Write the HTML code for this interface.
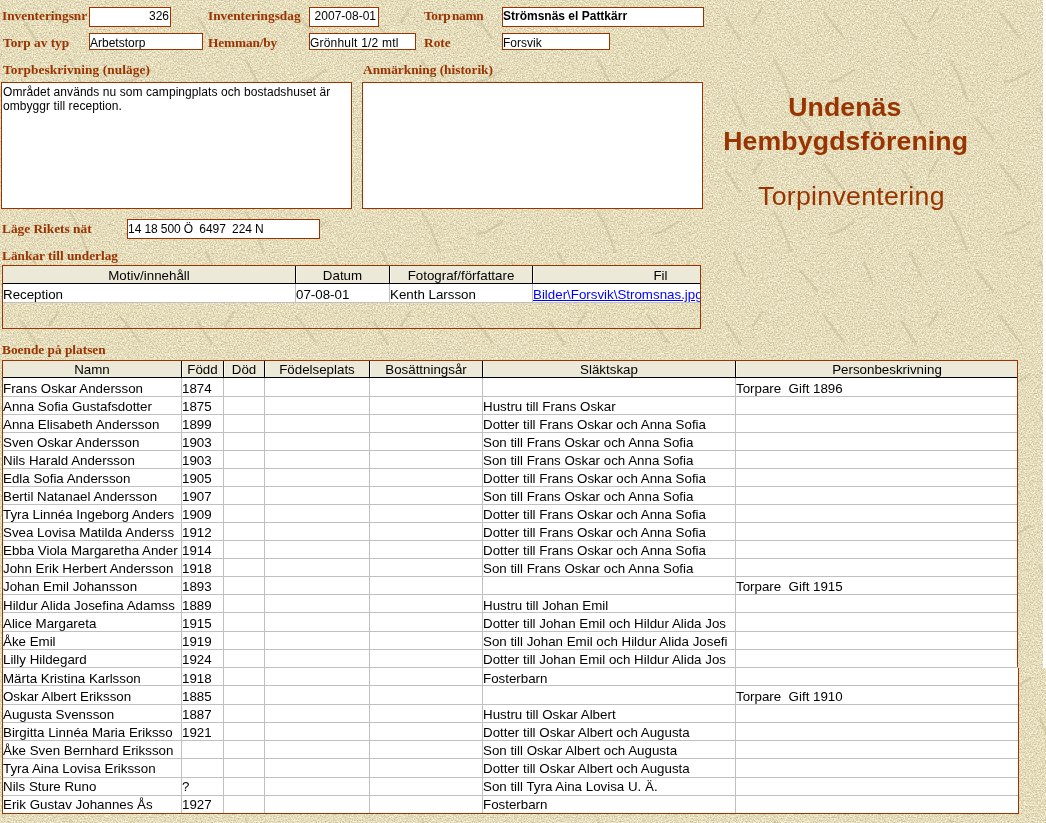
<!DOCTYPE html>
<html><head><meta charset="utf-8"><title>Torpinventering</title><style>
*{margin:0;padding:0;box-sizing:border-box}
html,body{width:1046px;height:823px;overflow:hidden}
body{position:relative;background:#e3dbba;font-family:"Liberation Sans",sans-serif;font-size:12px;color:#000}
#tex{position:absolute;left:0;top:0;width:1046px;height:823px}
.a{position:absolute;white-space:pre}
.lb{position:absolute;white-space:pre;font-family:"Liberation Serif",serif;font-weight:bold;font-size:13.33px;line-height:16px;color:#993300}
.bx{position:absolute;background:#fff;border:1px solid #993300;overflow:hidden;white-space:pre;font-size:12px;line-height:14px;padding:2px 1px 0 0}
.t{position:absolute;white-space:pre;font-size:13.33px;line-height:18px;overflow:hidden;height:18px}
.h{position:absolute;white-space:pre;font-size:13.33px;line-height:16px;text-align:center;height:16px;overflow:hidden}
.hl{position:absolute;height:1px;background:#c0c0c0}
.vl{position:absolute;width:1px;background:#c0c0c0}
.ttl{position:absolute;white-space:pre;color:#993300;text-align:center;width:400px}
</style></head><body>
<svg id="tex" width="1046" height="823"><filter id="n" x="0" y="0" width="100%" height="100%" color-interpolation-filters="sRGB"><feTurbulence type="fractalNoise" baseFrequency="0.75" numOctaves="2" seed="7"/><feColorMatrix type="matrix" values="0.45 0 0 0 0.669  0.45 0 0 0 0.638  0.50 0 0 0 0.483  0 0 0 0 1"/></filter><rect width="1046" height="823" filter="url(#n)"/><defs><filter id="b" x="-20%" y="-20%" width="140%" height="140%"><feGaussianBlur stdDeviation="0.7"/></filter><pattern id="s" width="176" height="152" patternUnits="userSpaceOnUse"><g stroke="#b9b088" stroke-opacity="0.38" stroke-width="2.4" stroke-linecap="round" fill="none" filter="url(#b)"><path d="M22 18l14 22"/><path d="M70 60l9 17l8 22"/><path d="M120 12l20 26"/><path d="M150 70l-16 10l-9 2"/><path d="M30 100l11 24"/><path d="M96 118l17 21"/><path d="M160 110l8 20"/><path d="M58 8l-9 14"/></g></pattern></defs><rect width="1046" height="823" fill="url(#s)"/></svg>
<div id="w" style="position:absolute;left:0;top:0;width:1046px;height:823px;will-change:transform">
<div class="a" style="left:1043px;top:0;width:3px;height:668px;background:#fff"></div>
<div class="lb" style="left:2px;top:8px;">Inventeringsnr</div>
<div class="lb" style="left:208px;top:8px;">Inventeringsdag</div>
<div class="lb" style="left:424px;top:8px;word-spacing:-1.5px;letter-spacing:-0.3px">Torp namn</div>
<div class="lb" style="left:3px;top:35px;">Torp av typ</div>
<div class="lb" style="left:208px;top:35px;letter-spacing:-0.15px">Hemman/by</div>
<div class="lb" style="left:424px;top:35px;">Rote</div>
<div class="lb" style="left:3px;top:62px;letter-spacing:0.08px">Torpbeskrivning (nuläge)</div>
<div class="lb" style="left:363px;top:62px;">Anmärkning (historik)</div>
<div class="lb" style="left:2px;top:221px;">Läge Rikets nät</div>
<div class="lb" style="left:2px;top:248px;">Länkar till underlag</div>
<div class="lb" style="left:2px;top:342px;">Boende på platsen</div>
<div class="bx" style="left:89px;top:7px;width:82px;height:20px;text-align:right;padding-right:1px;padding-top:1px">326</div>
<div class="bx" style="left:309px;top:7px;width:70px;height:20px;text-align:right;padding-right:2px;padding-top:1px">2007-08-01</div>
<div class="bx" style="left:502px;top:7px;width:202px;height:20px;font-weight:bold;padding-top:1px">Strömsnäs el Pattkärr</div>
<div class="bx" style="left:89px;top:33px;width:114px;height:17px;">Arbetstorp</div>
<div class="bx" style="left:309px;top:33px;width:107px;height:17px;letter-spacing:0.2px">Grönhult 1/2 mtl</div>
<div class="bx" style="left:502px;top:33px;width:108px;height:17px;">Forsvik</div>
<div class="bx" style="left:1px;top:82px;width:351px;height:127px;padding-left:1px;letter-spacing:0.07px">Området används nu som campingplats och bostadshuset är
ombyggr till reception.</div>
<div class="bx" style="left:362px;top:82px;width:341px;height:127px;"></div>
<div class="bx" style="left:127px;top:219px;width:193px;height:20px;padding-top:2px;padding-left:0;word-spacing:-0.3px">14 18 500 Ö  6497  224 N</div>
<div class="a" style="left:788.2px;top:91.46px;font-size:26.67px;line-height:32px;font-weight:bold;letter-spacing:0.1px;color:#993300">Undenäs</div>
<div class="a" style="left:723.2px;top:125.36px;font-size:26.67px;line-height:32px;font-weight:bold;letter-spacing:0.13px;color:#993300">Hembygdsförening</div>
<div class="a" style="left:758.0px;top:180.06px;font-size:26.67px;line-height:32px;font-weight:normal;letter-spacing:0.3px;color:#993300">Torpinventering</div>
<div class="a" style="left:2px;top:265px;width:699px;height:64px;border:1px solid #993300;overflow:hidden">
<div class="a" style="left:0;top:0;width:800px;height:18px;background:#ece9d8;border-bottom:1px solid #000"></div>
<div class="a" style="left:0;top:18px;width:800px;height:19px;background:#fff;border-bottom:1px solid #c0c0c0"></div>
<div class="h" style="left:0px;top:1px;width:292px;line-height:17px;height:17px">Motiv/innehåll</div>
<div class="t" style="left:0px;top:20px;width:292px;height:17px">Reception</div>
<div class="h" style="left:293px;top:1px;width:93px;line-height:17px;height:17px">Datum</div>
<div class="t" style="left:293px;top:20px;width:93px;height:17px">07-08-01</div>
<div class="a" style="left:292px;top:0;width:1px;height:17px;background:#000"></div>
<div class="a" style="left:293px;top:0;width:1px;height:17px;background:#fff;opacity:.6"></div>
<div class="vl" style="left:292px;top:18px;height:18px"></div>
<div class="h" style="left:387px;top:1px;width:142px;line-height:17px;height:17px">Fotograf/författare</div>
<div class="t" style="left:387px;top:20px;width:142px;height:17px">Kenth Larsson</div>
<div class="a" style="left:386px;top:0;width:1px;height:17px;background:#000"></div>
<div class="a" style="left:387px;top:0;width:1px;height:17px;background:#fff;opacity:.6"></div>
<div class="vl" style="left:386px;top:18px;height:18px"></div>
<div class="h" style="left:530px;top:1px;width:255px;line-height:17px;height:17px">Fil</div>
<div class="t" style="left:530px;top:20px;width:255px;height:17px"><span style="color:#0000ff;text-decoration:underline">Bilder\Forsvik\Stromsnas.jpg</span></div>
<div class="a" style="left:529px;top:0;width:1px;height:17px;background:#000"></div>
<div class="a" style="left:530px;top:0;width:1px;height:17px;background:#fff;opacity:.6"></div>
<div class="vl" style="left:529px;top:18px;height:18px"></div>
</div>
<div class="a" style="left:2px;top:360px;width:1016px;height:454px;border:1px solid #993300;background:#fff;overflow:hidden">
<div class="a" style="left:0;top:0;width:1100px;height:16px;background:#ece9d8"></div>
<div class="a" style="left:0;top:16px;width:1100px;height:1px;background:#000"></div>
<div class="h" style="left:0px;top:1px;width:178px">Namn</div>
<div class="h" style="left:179px;top:1px;width:41px">Född</div>
<div class="a" style="left:178px;top:0;width:1px;height:16px;background:#000"></div>
<div class="a" style="left:179px;top:0;width:1px;height:16px;background:#fff;opacity:.6"></div>
<div class="vl" style="left:178px;top:17px;height:500px"></div>
<div class="h" style="left:221px;top:1px;width:40px">Död</div>
<div class="a" style="left:220px;top:0;width:1px;height:16px;background:#000"></div>
<div class="a" style="left:221px;top:0;width:1px;height:16px;background:#fff;opacity:.6"></div>
<div class="vl" style="left:220px;top:17px;height:500px"></div>
<div class="h" style="left:262px;top:1px;width:104px">Födelseplats</div>
<div class="a" style="left:261px;top:0;width:1px;height:16px;background:#000"></div>
<div class="a" style="left:262px;top:0;width:1px;height:16px;background:#fff;opacity:.6"></div>
<div class="vl" style="left:261px;top:17px;height:500px"></div>
<div class="h" style="left:367px;top:1px;width:112px">Bosättningsår</div>
<div class="a" style="left:366px;top:0;width:1px;height:16px;background:#000"></div>
<div class="a" style="left:367px;top:0;width:1px;height:16px;background:#fff;opacity:.6"></div>
<div class="vl" style="left:366px;top:17px;height:500px"></div>
<div class="h" style="left:480px;top:1px;width:252px">Släktskap</div>
<div class="a" style="left:479px;top:0;width:1px;height:16px;background:#000"></div>
<div class="a" style="left:480px;top:0;width:1px;height:16px;background:#fff;opacity:.6"></div>
<div class="vl" style="left:479px;top:17px;height:500px"></div>
<div class="h" style="left:733px;top:1px;width:302px">Personbeskrivning</div>
<div class="a" style="left:732px;top:0;width:1px;height:16px;background:#000"></div>
<div class="a" style="left:733px;top:0;width:1px;height:16px;background:#fff;opacity:.6"></div>
<div class="vl" style="left:732px;top:17px;height:500px"></div>
<div class="hl" style="left:0;top:35px;width:1100px"></div>
<div class="t" style="left:0px;top:19px;width:178px">Frans Oskar Andersson</div>
<div class="t" style="left:179px;top:19px;width:41px">1874</div>
<div class="t" style="left:733px;top:19px;width:302px">Torpare  Gift 1896</div>
<div class="hl" style="left:0;top:53px;width:1100px"></div>
<div class="t" style="left:0px;top:37px;width:178px">Anna Sofia Gustafsdotter</div>
<div class="t" style="left:179px;top:37px;width:41px">1875</div>
<div class="t" style="left:480px;top:37px;width:252px">Hustru till Frans Oskar</div>
<div class="hl" style="left:0;top:71px;width:1100px"></div>
<div class="t" style="left:0px;top:55px;width:178px">Anna Elisabeth Andersson</div>
<div class="t" style="left:179px;top:55px;width:41px">1899</div>
<div class="t" style="left:480px;top:55px;width:252px">Dotter till Frans Oskar och Anna Sofia</div>
<div class="hl" style="left:0;top:89px;width:1100px"></div>
<div class="t" style="left:0px;top:73px;width:178px">Sven Oskar Andersson</div>
<div class="t" style="left:179px;top:73px;width:41px">1903</div>
<div class="t" style="left:480px;top:73px;width:252px">Son till Frans Oskar och Anna Sofia</div>
<div class="hl" style="left:0;top:107px;width:1100px"></div>
<div class="t" style="left:0px;top:91px;width:178px">Nils Harald Andersson</div>
<div class="t" style="left:179px;top:91px;width:41px">1903</div>
<div class="t" style="left:480px;top:91px;width:252px">Son till Frans Oskar och Anna Sofia</div>
<div class="hl" style="left:0;top:125px;width:1100px"></div>
<div class="t" style="left:0px;top:109px;width:178px">Edla Sofia Andersson</div>
<div class="t" style="left:179px;top:109px;width:41px">1905</div>
<div class="t" style="left:480px;top:109px;width:252px">Dotter till Frans Oskar och Anna Sofia</div>
<div class="hl" style="left:0;top:143px;width:1100px"></div>
<div class="t" style="left:0px;top:127px;width:178px">Bertil Natanael Andersson</div>
<div class="t" style="left:179px;top:127px;width:41px">1907</div>
<div class="t" style="left:480px;top:127px;width:252px">Son till Frans Oskar och Anna Sofia</div>
<div class="hl" style="left:0;top:161px;width:1100px"></div>
<div class="t" style="left:0px;top:145px;width:178px">Tyra Linnéa Ingeborg Anders</div>
<div class="t" style="left:179px;top:145px;width:41px">1909</div>
<div class="t" style="left:480px;top:145px;width:252px">Dotter till Frans Oskar och Anna Sofia</div>
<div class="hl" style="left:0;top:179px;width:1100px"></div>
<div class="t" style="left:0px;top:163px;width:178px">Svea Lovisa Matilda Anderss</div>
<div class="t" style="left:179px;top:163px;width:41px">1912</div>
<div class="t" style="left:480px;top:163px;width:252px">Dotter till Frans Oskar och Anna Sofia</div>
<div class="hl" style="left:0;top:197px;width:1100px"></div>
<div class="t" style="left:0px;top:181px;width:178px">Ebba Viola Margaretha Ander</div>
<div class="t" style="left:179px;top:181px;width:41px">1914</div>
<div class="t" style="left:480px;top:181px;width:252px">Dotter till Frans Oskar och Anna Sofia</div>
<div class="hl" style="left:0;top:215px;width:1100px"></div>
<div class="t" style="left:0px;top:199px;width:178px">John Erik Herbert Andersson</div>
<div class="t" style="left:179px;top:199px;width:41px">1918</div>
<div class="t" style="left:480px;top:199px;width:252px">Son till Frans Oskar och Anna Sofia</div>
<div class="hl" style="left:0;top:233px;width:1100px"></div>
<div class="t" style="left:0px;top:217px;width:178px">Johan Emil Johansson</div>
<div class="t" style="left:179px;top:217px;width:41px">1893</div>
<div class="t" style="left:733px;top:217px;width:302px">Torpare  Gift 1915</div>
<div class="hl" style="left:0;top:251px;width:1100px"></div>
<div class="t" style="left:0px;top:236px;width:178px">Hildur Alida Josefina Adamss</div>
<div class="t" style="left:179px;top:236px;width:41px">1889</div>
<div class="t" style="left:480px;top:236px;width:252px">Hustru till Johan Emil</div>
<div class="hl" style="left:0;top:270px;width:1100px"></div>
<div class="t" style="left:0px;top:254px;width:178px">Alice Margareta</div>
<div class="t" style="left:179px;top:254px;width:41px">1915</div>
<div class="t" style="left:480px;top:254px;width:252px">Dotter till Johan Emil och Hildur Alida Jos</div>
<div class="hl" style="left:0;top:288px;width:1100px"></div>
<div class="t" style="left:0px;top:272px;width:178px">Åke Emil</div>
<div class="t" style="left:179px;top:272px;width:41px">1919</div>
<div class="t" style="left:480px;top:272px;width:252px">Son till Johan Emil och Hildur Alida Josefi</div>
<div class="hl" style="left:0;top:306px;width:1100px"></div>
<div class="t" style="left:0px;top:290px;width:178px">Lilly Hildegard</div>
<div class="t" style="left:179px;top:290px;width:41px">1924</div>
<div class="t" style="left:480px;top:290px;width:252px">Dotter till Johan Emil och Hildur Alida Jos</div>
<div class="hl" style="left:0;top:324px;width:1100px"></div>
<div class="t" style="left:0px;top:309px;width:178px">Märta Kristina Karlsson</div>
<div class="t" style="left:179px;top:309px;width:41px">1918</div>
<div class="t" style="left:480px;top:309px;width:252px">Fosterbarn</div>
<div class="hl" style="left:0;top:343px;width:1100px"></div>
<div class="t" style="left:0px;top:327px;width:178px">Oskar Albert Eriksson</div>
<div class="t" style="left:179px;top:327px;width:41px">1885</div>
<div class="t" style="left:733px;top:327px;width:302px">Torpare  Gift 1910</div>
<div class="hl" style="left:0;top:361px;width:1100px"></div>
<div class="t" style="left:0px;top:345px;width:178px">Augusta Svensson</div>
<div class="t" style="left:179px;top:345px;width:41px">1887</div>
<div class="t" style="left:480px;top:345px;width:252px">Hustru till Oskar Albert</div>
<div class="hl" style="left:0;top:379px;width:1100px"></div>
<div class="t" style="left:0px;top:363px;width:178px">Birgitta Linnéa Maria Eriksso</div>
<div class="t" style="left:179px;top:363px;width:41px">1921</div>
<div class="t" style="left:480px;top:363px;width:252px">Dotter till Oskar Albert och Augusta</div>
<div class="hl" style="left:0;top:397px;width:1100px"></div>
<div class="t" style="left:0px;top:381px;width:178px">Åke Sven Bernhard Eriksson</div>
<div class="t" style="left:480px;top:381px;width:252px">Son till Oskar Albert och Augusta</div>
<div class="hl" style="left:0;top:416px;width:1100px"></div>
<div class="t" style="left:0px;top:399px;width:178px">Tyra Aina Lovisa Eriksson</div>
<div class="t" style="left:480px;top:399px;width:252px">Dotter till Oskar Albert och Augusta</div>
<div class="hl" style="left:0;top:434px;width:1100px"></div>
<div class="t" style="left:0px;top:417px;width:178px">Nils Sture Runo</div>
<div class="t" style="left:179px;top:417px;width:41px">?</div>
<div class="t" style="left:480px;top:417px;width:252px">Son till Tyra Aina Lovisa U. Ä.</div>
<div class="t" style="left:0px;top:435px;width:178px">Erik Gustav Johannes Ås</div>
<div class="t" style="left:179px;top:435px;width:41px">1927</div>
<div class="t" style="left:480px;top:435px;width:252px">Fosterbarn</div>
</div>
<div class="a" style="left:1017px;top:668px;width:1px;height:145px;background:#fff"></div>
<div class="a" style="left:1018px;top:668px;width:1px;height:146px;background:#993300"></div>
<div class="a" style="left:1017px;top:813px;width:1px;height:1px;background:#993300"></div>
<div class="hl" style="left:1017px;top:667px;width:1px"></div>
<div class="hl" style="left:1017px;top:685px;width:1px"></div>
<div class="hl" style="left:1017px;top:704px;width:1px"></div>
<div class="hl" style="left:1017px;top:722px;width:1px"></div>
<div class="hl" style="left:1017px;top:740px;width:1px"></div>
<div class="hl" style="left:1017px;top:758px;width:1px"></div>
<div class="hl" style="left:1017px;top:777px;width:1px"></div>
<div class="hl" style="left:1017px;top:795px;width:1px"></div>
</div>
</body></html>
